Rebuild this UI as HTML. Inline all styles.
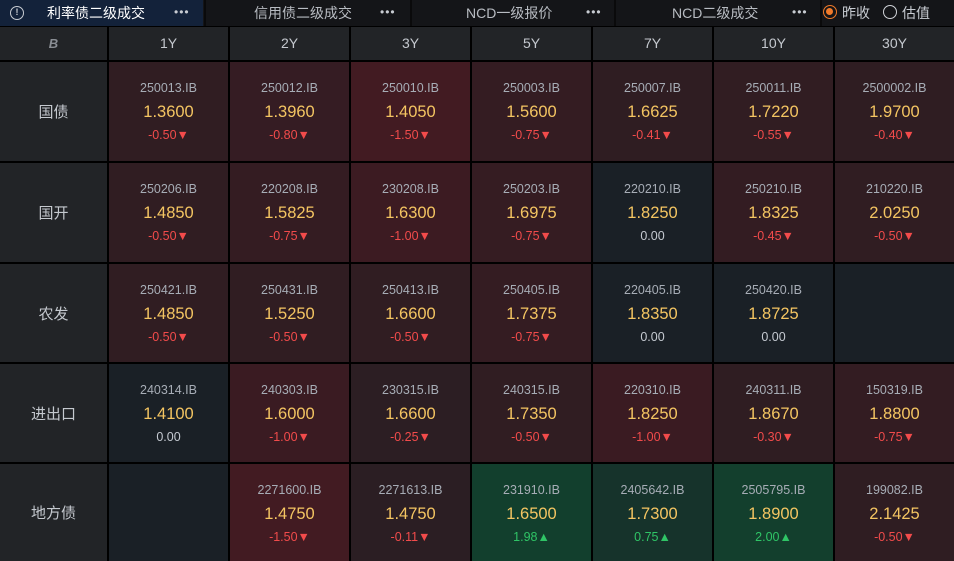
<!DOCTYPE html>
<html><head><meta charset="utf-8"><style>
*{margin:0;padding:0;box-sizing:border-box}
body{width:954px;height:561px;background:#000;font-family:"Liberation Sans","Noto Sans CJK SC",sans-serif;position:relative;overflow:hidden}
.top{position:absolute;left:0;top:0;width:954px;height:26px;background:#141518}
.tab{position:absolute;top:0;height:26px;color:#b8bcc2;font-size:14px;line-height:26px}
.sep{position:absolute;top:0;width:2px;height:26px;background:#0a0a0b}
.dots{position:absolute;top:0;font-size:12px;color:#c8ccd2;line-height:24px;letter-spacing:1px}
.c{position:absolute;text-align:center;background:#222427;color:#c5c9cf}
.h{font-size:14px;line-height:33px}
.lab{font-size:15px;display:flex;align-items:center;justify-content:center}
.cell .cd{position:absolute;left:0;right:0;top:19px;font-size:12.5px;color:#a7adb6}
.cell .v{position:absolute;left:0;right:0;top:41px;font-size:16.5px;color:#f4c562}
.cell .ch{position:absolute;left:0;right:0;top:66px;font-size:12.5px}
.r{color:#f24b4b}.n{color:#c5cad1}.g{color:#2fc466}
.rad{position:absolute;top:5px;width:14px;height:14px;border-radius:50%;border:1.5px solid #d0d3d8}
</style></head><body>
<div class="top">
 <div style="position:absolute;left:0;top:0;width:203px;height:26px;background:#13223a"></div>
 <div style="position:absolute;left:10px;top:6px;width:14px;height:14px;border:1.5px solid #c8ccd2;border-radius:50%;color:#c8ccd2;font-size:9px;line-height:11px;text-align:center;font-weight:bold">!</div>
 <div class="tab" style="left:47px;color:#fff">利率债二级成交</div>
 <div class="dots" style="left:174px">•••</div>
 <div class="sep" style="left:204px"></div>
 <div class="tab" style="left:254px">信用债二级成交</div>
 <div class="dots" style="left:380px">•••</div>
 <div class="sep" style="left:410px"></div>
 <div class="tab" style="left:466px">NCD一级报价</div>
 <div class="dots" style="left:586px">•••</div>
 <div class="sep" style="left:614px"></div>
 <div class="tab" style="left:672px">NCD二级成交</div>
 <div class="dots" style="left:792px">•••</div>
 <div class="sep" style="left:820px"></div>
 <div class="rad" style="left:823px;border-color:#f07a2a"><div style="position:absolute;left:2px;top:2px;width:7px;height:7px;border-radius:50%;background:#f07a2a"></div></div>
 <div class="tab" style="left:842px;color:#c8ccd2">昨收</div>
 <div class="rad" style="left:883px"></div>
 <div class="tab" style="left:902px;color:#c8ccd2">估值</div>
</div>
<div id="g"></div>
<script>
var cols=[109,230,351,472,593,714,835],cw=[119,119,119,119,119,119,119];
var rows=[62,163,264,364,464],rh=[99,99,98,98,97];
var html='';
html+='<div class="c h" style="left:0;top:27px;width:107px;height:33px;color:#8a8e94;font-weight:bold;font-style:italic;font-size:13px">B</div>';
var hy=['1Y','2Y','3Y','5Y','7Y','10Y','30Y'];
for(var i=0;i<7;i++)html+='<div class="c h" style="left:'+cols[i]+'px;top:27px;width:'+cw[i]+'px;height:33px">'+hy[i]+'</div>';
var labs=['国债','国开','农发','进出口','地方债'];
var N='#1a2026';
var data=[
[['250013.IB','1.3600','-0.50','r','#301d22'],['250012.IB','1.3960','-0.80','r','#351c23'],['250010.IB','1.4050','-1.50','r','#421b22'],['250003.IB','1.5600','-0.75','r','#341c22'],['250007.IB','1.6625','-0.41','r','#2f1d22'],['250011.IB','1.7220','-0.55','r','#311d22'],['2500002.IB','1.9700','-0.40','r','#2f1d22']],
[['250206.IB','1.4850','-0.50','r','#301d22'],['220208.IB','1.5825','-0.75','r','#341c22'],['230208.IB','1.6300','-1.00','r','#3c1b22'],['250203.IB','1.6975','-0.75','r','#351c22'],['220210.IB','1.8250','0.00','n',N],['250210.IB','1.8325','-0.45','r','#331c22'],['210220.IB','2.0250','-0.50','r','#301d22']],
[['250421.IB','1.4850','-0.50','r','#301d22'],['250431.IB','1.5250','-0.50','r','#301d22'],['250413.IB','1.6600','-0.50','r','#301d22'],['250405.IB','1.7375','-0.75','r','#341c22'],['220405.IB','1.8350','0.00','n',N],['250420.IB','1.8725','0.00','n',N],null],
[['240314.IB','1.4100','0.00','n',N],['240303.IB','1.6000','-1.00','r','#3a1b22'],['230315.IB','1.6600','-0.25','r','#2c1e23'],['240315.IB','1.7350','-0.50','r','#301d22'],['220310.IB','1.8250','-1.00','r','#3a1b22'],['240311.IB','1.8670','-0.30','r','#2f1d22'],['150319.IB','1.8800','-0.75','r','#331c22']],
[null,['2271600.IB','1.4750','-1.50','r','#421b22'],['2271613.IB','1.4750','-0.11','r','#2b1e23'],['231910.IB','1.6500','1.98','g','#123f2d'],['2405642.IB','1.7300','0.75','g','#16332b'],['2505795.IB','1.8900','2.00','g','#133f2d'],['199082.IB','2.1425','-0.50','r','#2f1d22']]
];
for(var r=0;r<5;r++){
 html+='<div class="c lab" style="left:0;top:'+rows[r]+'px;width:107px;height:'+rh[r]+'px">'+labs[r]+'</div>';
 for(var i=0;i<7;i++){
  var d=data[r][i];
  var st='left:'+cols[i]+'px;top:'+rows[r]+'px;width:'+cw[i]+'px;height:'+rh[r]+'px;';
  if(!d){html+='<div class="c" style="'+st+'background:'+N+'"></div>';continue;}
  var arr=d[3]=='r'?'▼':d[3]=='g'?'▲':'';
  html+='<div class="c cell" style="'+st+'background:'+d[4]+'"><div class="cd">'+d[0]+'</div><div class="v">'+d[1]+'</div><div class="ch '+d[3]+'">'+d[2]+arr+'</div></div>';
 }
}
document.getElementById('g').innerHTML=html;
</script>
</body></html>
